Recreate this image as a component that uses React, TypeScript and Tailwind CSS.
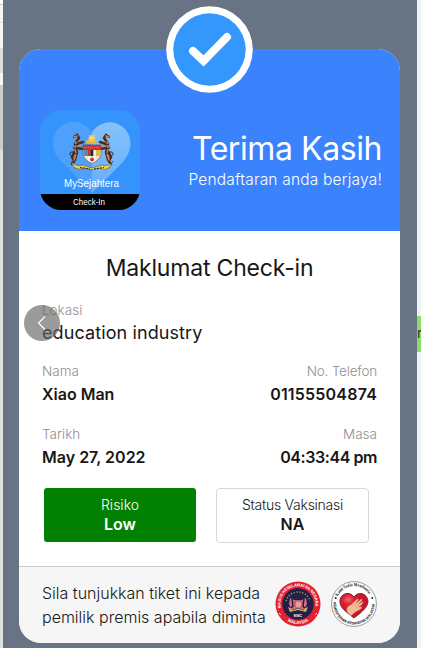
import React from "react";

function CheckBadge() {
  return (
    <svg className="absolute left-1/2 top-[-43px] ml-[-44px] h-[87px] w-[87px]" viewBox="0 0 87 87">
      <circle cx="43.5" cy="43.5" r="43.3" fill="#fff" />
      <circle cx="43.5" cy="43.5" r="36.2" fill="#3397fb" />
      <path d="M27 45L37.5 55L61 31" fill="none" stroke="#fff" strokeWidth="8" strokeLinecap="round" />
      <path d="M34 55L37.5 60.3L43 55Z" fill="#fff" />
    </svg>
  );
}

function Tiger() {
  return (
    <g fill="none" strokeLinecap="round">
      <path d="M44 37L47 35L49 38L46 42L45 47L47 52L45 60L42 64M45 51L42 57L44 61M47 44L53 42M47 48L53 49" stroke="#4b2d1e" strokeWidth="2.5" />
      <path d="M44 37L47 36M46 42L45 48L46 54L44 60M48 46L51 45" stroke="#dc813d" strokeWidth="1.5" />
      <path d="M42 56C38 55 40 51 43 52" stroke="#39251c" strokeWidth="1" />
      <path d="M44 44L47 45M43 48L46 49M44 53L47 54" stroke="#241814" strokeWidth=".8" />
    </g>
  );
}

function AppLogo() {
  return (
    <svg className="h-[101px] w-[101px]" viewBox="0 0 101 101">
      <defs>
        <clipPath id="tile"><rect width="100" height="100" rx="21" /></clipPath>
        <linearGradient id="rightHeart" x1="0" y1="0" x2="0" y2="1">
          <stop offset="0" stopColor="#85c2fb" />
          <stop offset="1" stopColor="#65adfb" />
        </linearGradient>
      </defs>
      <g clipPath="url(#tile)">
        <rect width="101" height="101" fill="#3593fc" />
        <path d="M52 83L19 49C8 36 13 18 27 13C38 9 46 15 52 22Z" fill="#4ea0fb" />
        <path d="M52 83V22C60 11 73 9 83 17C94 27 92 42 82 53Z" fill="url(#rightHeart)" />
        <rect y="84" width="101" height="17" fill="#000" />
      </g>
      <g transform="translate(-10 -10)">
        <path d="M56 41Q61 37 66 41L67 44H56Z" fill="#e5b842" />
        <circle cx="61.8" cy="38" r="2.8" fill="#f4cd45" />
        <path d="M61.8 34.5V42M57.8 38H65.8M58.8 35L64.8 41M64.8 35L58.8 41" stroke="#ffdb63" strokeWidth=".8" />
        <Tiger />
        <g transform="translate(123 0) scale(-1 1)"><Tiger /></g>
        <path d="M53 45H71V55Q69 61 62 63Q55 61 53 55Z" fill="#eee6cd" stroke="#61432b" strokeWidth=".6" />
        <path d="M53 45H71V50H53Z" fill="#c63330" />
        <path d="M54 47.5H70" stroke="#e28b35" strokeWidth=".8" strokeDasharray="1 1" />
        <path d="M53.5 50H58V56H53.5Z" fill="#4c91a8" />
        <path d="M58 50H60.5V56H58Z" fill="#c73432" />
        <path d="M60.5 50H63.5V56H60.5Z" fill="#252323" />
        <path d="M63.5 50H66V56H63.5Z" fill="#f1eee0" />
        <path d="M66 50H70.5V56H66Z" fill="#e5b83c" />
        <path d="M58 56H66V61L62 63L58 61Z" fill="#f3f3e8" />
        <circle cx="62" cy="59.5" r="2" fill="#c83b3b" />
        <path d="M41 61Q45 67 53 65L62 68L71 65Q79 67 83 61L79 68Q75 71 69 68L62 70L54 68Q47 71 43 66Z" fill="#eecd53" stroke="#4c4326" strokeWidth=".5" />
        <path d="M50 67.5L60 69M64 69L74 67.5" stroke="#24302d" strokeWidth="1" strokeDasharray="2 1" />
      </g>
      <text x="51.5" y="76.5" textAnchor="middle" fontFamily="Liberation Sans, sans-serif" fontSize="10.3" textLength="55" lengthAdjust="spacingAndGlyphs" fill="#fff">MySejahtera</text>
      <text x="49" y="95" textAnchor="middle" fontFamily="Liberation Sans, sans-serif" fontSize="8.4" textLength="32" lengthAdjust="spacingAndGlyphs" fill="#fff">Check-In</text>
    </svg>
  );
}

function CouncilSeal() {
  return (
    <svg className="h-[46px] w-[46px] shrink-0" viewBox="0 0 46 46">
      <defs>
        <path id="sealTop" d="M6 27A17.5 17.5 0 1 1 40 27" />
        <path id="sealBottom" d="M4.8 31A19.8 19.8 0 0 0 41.2 31" />
      </defs>
      <circle cx="23" cy="23" r="22.5" fill="#e41f31" />
      <circle cx="23" cy="23" r="15.7" fill="#20204b" />
      <text fill="#fff" fontFamily="Liberation Sans, sans-serif" fontWeight="bold" fontSize="4">
        <textPath href="#sealTop" textLength="61">MAJLIS KESELAMATAN NEGARA</textPath>
      </text>
      <text fill="#fff" fontFamily="Liberation Sans, sans-serif" fontWeight="bold" fontSize="4.3">
        <textPath href="#sealBottom" startOffset="50%" textAnchor="middle">MALAYSIA</textPath>
      </text>
      <path d="M11 20A12.5 12.5 0 0 1 35 20" fill="none" stroke="#b6a24e" strokeWidth="1.4" strokeDasharray="1.2 1.7" />
      <path d="M15 17L19 19H27L31 17L32 23L29 29H17L14 23Z" fill="#dd6c7d" />
      <path d="M17 18L18 25L15 29M29 18L28 25L31 29" stroke="#201e36" strokeWidth="1.4" fill="none" />
      <path d="M20 20H27V25L23.5 28L20 25Z" fill="#ec9b9b" stroke="#65304e" strokeWidth=".6" />
      <path d="M13 26L18 28L23 26L28 28L33 26L31 31L23 29L15 31Z" fill="#d5a86b" />
      <path d="M17 29L23 27L29 29" fill="none" stroke="#40334b" strokeWidth=".8" />
      <text x="23" y="36" textAnchor="middle" fill="#fff" fontFamily="Liberation Sans, sans-serif" fontWeight="bold" fontSize="4">NSC</text>
      <path d="M4 32L6 34M42 32L40 34" stroke="#fff" strokeWidth=".8" />
    </svg>
  );
}

function HealthSeal() {
  return (
    <svg className="h-[46px] w-[46px] shrink-0" viewBox="0 0 46 46">
      <defs>
        <path id="healthTop" d="M6.7 15.4A18 18 0 0 1 39.3 15.4" />
        <path id="healthBottom" d="M2.6 20A20.6 20.6 0 1 0 43.4 20" />
        <radialGradient id="heart" cx=".3" cy=".25">
          <stop offset="0" stopColor="#f36b6b" />
          <stop offset=".4" stopColor="#db2233" />
          <stop offset="1" stopColor="#c91529" />
        </radialGradient>
      </defs>
      <circle cx="23" cy="23" r="22.4" fill="#fff" stroke="#666" strokeWidth=".65" />
      <text fill="#111" fontFamily="Liberation Serif, serif" fontWeight="bold" fontSize="4.6">
        <textPath href="#healthTop" textLength="38" lengthAdjust="spacingAndGlyphs">Kami Sedia Membantu</textPath>
      </text>
      <text fill="#111" fontFamily="Liberation Sans, sans-serif" fontWeight="bold" fontSize="3.8">
        <textPath href="#healthBottom" startOffset="1" textLength="66" lengthAdjust="spacingAndGlyphs">KEMENTERIAN KESIHATAN MALAYSIA</textPath>
      </text>
      <circle cx="4.7" cy="17" r=".9" fill="#111" /><circle cx="41.3" cy="17" r=".9" fill="#111" />
      <path d="M23 37C14 30 8 26 9 19C10 12 19 10 23 16C27 10 36 12 37 20C37 26 31 31 23 37Z" fill="url(#heart)" stroke="#731924" strokeWidth=".9" />
      <path d="M16.5 31.5C14 27 17 25 20 23.5L26 18Q28 17 27.5 19L25.5 22L30 18Q32 17 31 19.5L28 23L31.5 20.5Q33 20.5 31.5 23L28 26L30 25.5Q32 26 30 28L24 31.5L20 35Z" fill="#f5ba91" stroke="#8f4f3d" strokeWidth=".4" />
      <path d="M25 23L23.5 25M28 24L25 27" stroke="#bf7c61" strokeWidth=".4" />
    </svg>
  );
}

function Detail({ label, value, labelClass, valueClass }: { label: string; value: string; labelClass: string; valueClass: string }) {
  return (
    <div>
      <div className={`text-[13.5px] font-light leading-5 text-[#909090] ${labelClass}`}>{label}</div>
      <div className={`mt-px mb-px text-[16px] font-semibold leading-6 text-[#171717] ${valueClass}`}>{value}</div>
    </div>
  );
}

export default function App() {
  return (
    <div className="flex h-[648px] w-[421px] overflow-hidden bg-[#f4f4f4] font-['Inter',sans-serif] whitespace-nowrap">
      <aside className="flex w-[3px] shrink-0 flex-col overflow-hidden bg-[#dedfdf]">
        <div className="h-[5px] shrink-0 border-b border-[#ccc] bg-white" />
        <div className="h-[18px] shrink-0 border-b border-[#ddd] bg-[#f6f6f6]" />
        <div className="h-[25px] shrink-0 bg-[#f6f6f6]" />
        <div className="h-[25px] shrink-0 bg-[#ddd]" />
        <div className="h-[12px] shrink-0 bg-[#f5f5f5]" />
        <div className="h-[65px] shrink-0 bg-[#ccc]" />
      </aside>
      <main className="h-full w-[414px] shrink-0 bg-[#687384] px-4 pt-[49px]">
        <section className="relative flex h-[594px] w-[381px] flex-col rounded-[22px] bg-[#f6f6f6]">
          <CheckBadge />
          <header className="flex h-[182px] shrink-0 justify-between rounded-t-[22px] bg-[#3b82fd] pl-[21px] pr-[18px] pt-[61px] text-white">
            <AppLogo />
            <div className="flex flex-col items-end pt-[19px]">
              <h1 className="text-[32px] leading-10 tracking-[-0.42px]">Terima Kasih</h1>
              <p className="mt-[1px] text-[15.5px] font-light leading-5 tracking-[0.2px]">Pendaftaran anda berjaya!</p>
            </div>
          </header>
          <div className="h-[335px] shrink-0 bg-white px-[23px]">
            <h2 className="pt-[21px] text-center text-[23px] leading-8 tracking-[-0.18px] text-[#171717]">Maklumat Check-in</h2>
            <div className="relative mt-[16px]">
              <div className="text-[13.5px] font-light leading-5 text-[#909090]">Lokasi</div>
              <div className="pt-px text-[18px] leading-6 tracking-[0.1px] text-[#171717]">education industry</div>
              <button aria-label="Kembali" className="absolute left-[-18px] top-[5px] flex h-9 w-9 items-center justify-center rounded-full bg-[#666]/65">
                <svg className="h-4 w-4" viewBox="0 0 16 16" fill="none" stroke="#fff" strokeWidth="1.1"><path d="M11 1.5L4.5 8L11 14.5" /></svg>
              </button>
            </div>
            <div className="mt-[16px] flex justify-between">
              <Detail label="Nama" value="Xiao Man" labelClass="" valueClass="" />
              <Detail label="No. Telefon" value="01155504874" labelClass="text-right tracking-[-0.2px]" valueClass="text-right tracking-[0.2px]" />
            </div>
            <div className="mt-[17px] flex justify-between">
              <Detail label="Tarikh" value="May 27, 2022" labelClass="" valueClass="" />
              <Detail label="Masa" value="04:33:44 pm" labelClass="text-right" valueClass="text-right tracking-[-0.43px]" />
            </div>
            <div className="ml-[2px] mt-[18px] flex gap-[20px] text-center">
              <div className="h-[54px] w-[152px] rounded-[3px] bg-[#028002] pt-[7px] text-white">
                <div className="text-[14px] font-light leading-5">Risiko</div>
                <div className="text-[16px] font-semibold leading-[19px]">Low</div>
              </div>
              <div className="h-[55px] w-[153px] rounded-[4px] border border-[#d8d8d8] pt-[6px] text-[#171717]">
                <div className="text-[14px] font-light leading-5 tracking-[-0.25px]">Status Vaksinasi</div>
                <div className="text-[16px] font-semibold leading-[19px]">NA</div>
              </div>
            </div>
          </div>
          <footer className="flex h-[77px] items-start rounded-b-[22px] border-t border-[#c9cccc] bg-[#f6f6f6] pl-[23px] pt-[14px]">
            <p className="w-[233px] shrink-0 text-[16px] font-light leading-6 text-[#171717]"><span>Sila tunjukkan tiket ini kepada</span><br />pemilik premis apabila diminta</p>
            <div className="flex gap-[10px]"><CouncilSeal /><HealthSeal /></div>
          </footer>
        </section>
      </main>
      <aside className="w-[4px] shrink-0 overflow-hidden bg-[#f0f1f3] pt-[316px]">
        <div className="h-9 bg-[#8bdf65] pt-[7px] text-[14px] leading-5 text-[#333]">r</div>
      </aside>
    </div>
  );
}
